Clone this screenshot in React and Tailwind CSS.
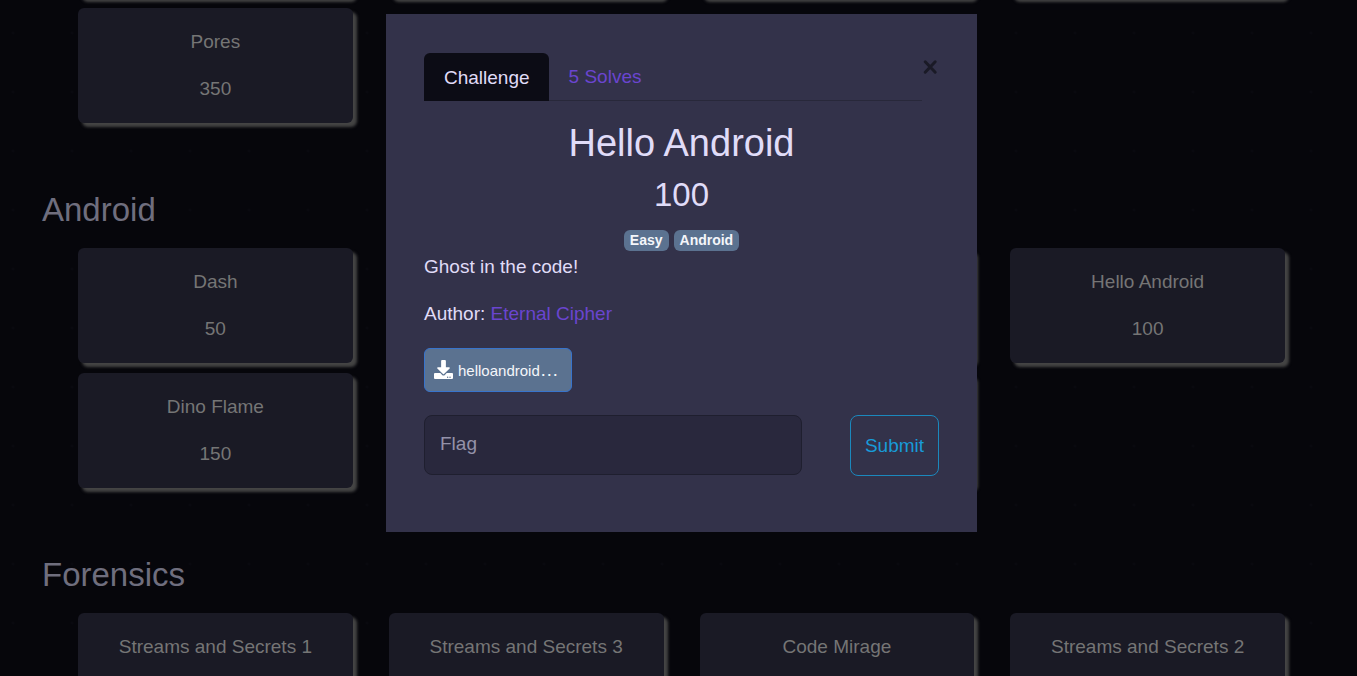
import { FaDownload } from 'react-icons/fa';

const webChallenges = [
  null,
  null,
  null,
  null,
  { name: 'Pores', points: 350 },
];

const androidChallenges = [
  { name: 'Dash', points: 50 },
  null,
  null,
  { name: 'Hello Android', points: 100 },
  { name: 'Dino Flame', points: 150 },
  null,
  null,
];

const forensicsChallenges = [
  { name: 'Streams and Secrets 1' },
  { name: 'Streams and Secrets 3' },
  { name: 'Code Mirage' },
  { name: 'Streams and Secrets 2' },
];

function ChallengeCard({ challenge }) {
  const frame =
    'h-[115px] rounded-md bg-[#1a1a25] shadow-[4px_4px_3px_#444444] text-center text-[19px] leading-[29px] text-[#757575]';
  if (!challenge) {
    return <div className={frame} aria-hidden="true" />;
  }
  return (
    <button type="button" className={`${frame} flex flex-col items-center gap-[18px] pt-[19px]`}>
      <span>{challenge.name}</span>
      {challenge.points && <span>{challenge.points}</span>}
    </button>
  );
}

function CardGrid({ items }) {
  return (
    <div className="grid grid-cols-4 gap-x-9 gap-y-[10px] pl-9">
      {items.map((item, i) => (
        <ChallengeCard key={i} challenge={item} />
      ))}
    </div>
  );
}

function Category({ title, items }) {
  return (
    <section className="pt-[67px]">
      <h3 className="mb-[18px] text-[33px] leading-10 text-[#6f6e7e]">{title}</h3>
      <CardGrid items={items} />
    </section>
  );
}

function Badge({ children }) {
  return (
    <span className="rounded-md bg-[#5b7290] px-[6px] text-[14px] leading-[21px] font-bold text-[#f4f6fa]">
      {children}
    </span>
  );
}

function ChallengeModal() {
  return (
    <div
      role="dialog"
      aria-labelledby="challenge-title"
      className="w-full max-w-[591px] bg-[#33324a] px-[38px] pt-[39px] pb-14 text-[19px] leading-[29px] text-[#e0dcf8]"
    >
      <div className="flex items-start">
        <div role="tablist" className="flex flex-1 border-b border-[#28283a]">
          <button
            type="button"
            role="tab"
            aria-selected="true"
            className="-mb-px h-12 rounded-t-md bg-[#0c0c15] pr-[19px] pl-5"
          >
            Challenge
          </button>
          <button type="button" role="tab" aria-selected="false" className="pr-[19px] pl-5 text-[#6a45cf]">
            5 Solves
          </button>
        </div>
        <button type="button" aria-label="Close" className="mt-1.5 pr-px text-[#1a1a26]">
          <svg width="16" height="16" viewBox="0 0 16 16" fill="none" stroke="currentColor" strokeWidth="3" strokeLinecap="round">
            <path d="M3.2 2.8 13.2 13.2M13.2 2.8 3.2 13.2" />
          </svg>
        </button>
      </div>

      <div className="flex flex-col items-center">
        <h2 id="challenge-title" className="mt-[19px] text-[38px] leading-[46px]">
          Hello Android
        </h2>
        <h3 className="mt-[9px] text-[33px] leading-10">100</h3>
        <div className="mt-[15px] flex gap-[5px]">
          <Badge>Easy</Badge>
          <Badge>Android</Badge>
        </div>
      </div>

      <p className="mt-px">Ghost in the code!</p>
      <p className="mt-[18px]">
        Author:{' '}
        <a href="#author" className="text-[#6a45cf]">
          Eternal Cipher
        </a>
      </p>

      <a
        href="#download"
        className="mt-5 flex h-11 w-[148px] items-center gap-[5px] rounded-md border border-[#3874cc] bg-[#5b7290] px-[9px] text-[#f4f6fa]"
      >
        <FaDownload size={19} className="mb-0.5 shrink-0 text-white" />
        <span className="text-[15px]">
          helloandroid<span className="text-[19px] leading-none">…</span>
        </span>
      </a>

      <form className="mt-[23px] flex gap-12" onSubmit={(e) => e.preventDefault()}>
        <input
          type="text"
          aria-label="Flag"
          placeholder="Flag"
          className="h-[60px] min-w-0 flex-1 rounded-lg border border-[#1f1f2f] bg-[#29283d] px-[15px] pb-0.5 placeholder:text-[#9492a9]"
        />
        <button type="submit" className="h-[61px] w-[89px] rounded-lg border border-[#1b88bd] text-[#189bd8]">
          Submit
        </button>
      </form>
    </div>
  );
}

export default function App() {
  return (
    <div className="h-screen overflow-hidden bg-[#06060b] bg-[radial-gradient(circle_at_13px_33px,#09090f_1px,transparent_2px)] bg-[size:59px_59px] font-['Liberation_Sans',Arial,sans-serif]">
      <main className="-mt-[117px] pr-[72px] pl-[42px]">
        <CardGrid items={webChallenges} />
        <Category title="Android" items={androidChallenges} />
        <Category title="Forensics" items={forensicsChallenges} />
      </main>
      <div className="fixed inset-0 flex items-start justify-center pt-[14px] pl-1.5">
        <ChallengeModal />
      </div>
    </div>
  );
}
